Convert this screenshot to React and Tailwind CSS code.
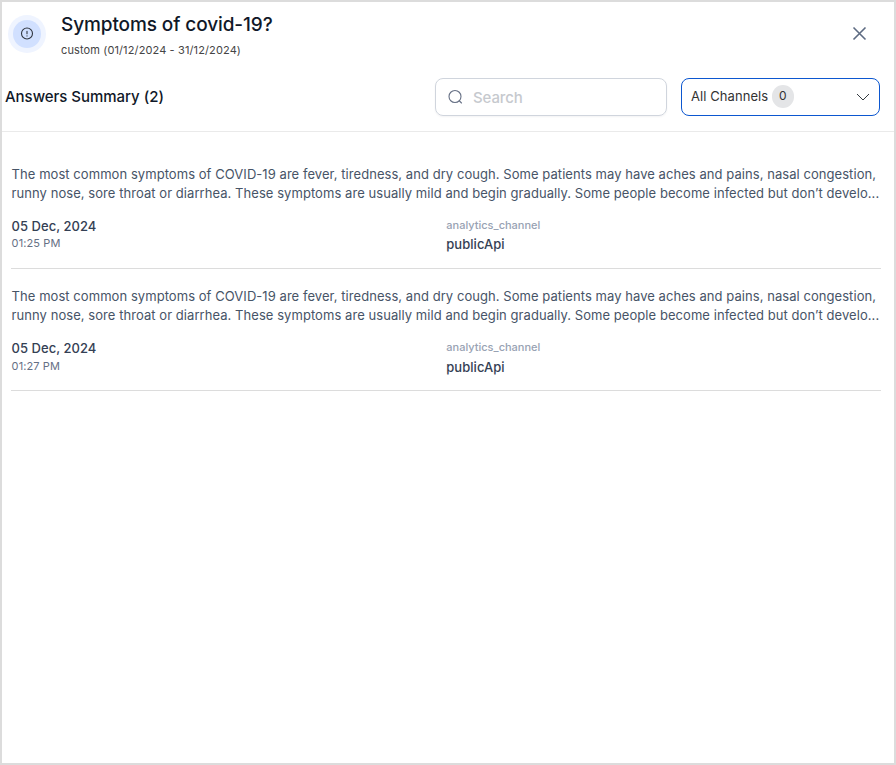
const answers = [
  { id: 1, date: '05 Dec, 2024', time: '01:25 PM', channel: 'publicApi', gap: 'mt-[-1px]' },
  { id: 2, date: '05 Dec, 2024', time: '01:27 PM', channel: 'publicApi', gap: 'mt-0' },
];

function Header() {
  return (
    <header className="flex h-[66px] items-start pl-[6px] pr-[27px]">
      <div className="mt-[13px] flex size-[38px] shrink-0 items-center justify-center rounded-full bg-[#eff4ff]">
        <div className="flex size-7 items-center justify-center rounded-full bg-[#d1e0ff]">
          <svg width="14" height="14" viewBox="0 0 14 14" fill="none" stroke="#303640" strokeWidth="1.1" strokeLinecap="round">
            <circle cx="7" cy="6.5" r="5.5" />
            <path d="M7 4.2v2.6M7 8.9v.1" />
          </svg>
        </div>
      </div>
      <div className="ml-[15px] flex-1 whitespace-nowrap">
        <h1 className="mt-[9px] text-[19px] leading-7 font-medium tracking-[-0.1px] text-[#101828]">Symptoms of covid-19?</h1>
        <p className="mt-[3px] text-[11px] leading-4 tracking-[0.12px] text-[#454545]">custom (01/12/2024 - 31/12/2024)</p>
      </div>
      <svg className="mt-[24px]" width="15" height="15" viewBox="0 0 15 15" fill="none" stroke="#5d6b82" strokeWidth="1.6">
        <path d="M1.5 1.5l12 12M13.5 1.5l-12 12" />
      </svg>
    </header>
  );
}

function Toolbar() {
  return (
    <div className="flex h-[64px] items-start border-b border-[#eaeaea] pt-[10px] pr-[14px] pl-[3px]">
      <h2 className="mt-[7px] flex-1 text-[15px] leading-6 font-medium tracking-[-0.03px] text-[#101828]">Answers Summary (2)</h2>
      <div className="flex h-[38px] w-[232px] items-center rounded-lg border border-[#d0d5dd] pl-[12px] shadow-[0_1px_2px_rgba(16,24,40,0.05)]">
        <svg width="16" height="16" viewBox="0 0 16 16" fill="none" stroke="#667085" strokeWidth="1.1" strokeLinecap="round">
          <circle cx="7" cy="7.5" r="6" />
          <path d="M11.5 12l2 2" />
        </svg>
        <input
          className="ml-[9px] w-40 pt-[2px] text-[15px] tracking-[-0.1px] font-medium text-[#667085] outline-none placeholder:text-[#c6c9ce]"
          placeholder="Search"
        />
      </div>
      <button className="ml-[14px] flex h-[38px] w-[199px] items-center rounded-lg border border-[#0c57d0] pr-[9px] pl-[9px] text-[13px] text-[#333]">
        <span className="tracking-[0.07px]">All Channels</span>
        <span className="ml-[3.5px] -mt-px flex h-[23px] w-[22px] justify-center rounded-full bg-[#e4e5e7] text-[12px] leading-[21px]">0</span>
        <svg className="ml-auto" width="14" height="8" viewBox="0 0 14 8" fill="none" stroke="#343a40" strokeWidth="1">
          <path d="M1 1l6 6 6-6" />
        </svg>
      </button>
    </div>
  );
}

function Answer({ date, time, channel, gap }) {
  return (
    <article className="h-[122px] border-b border-[#dcdcdc] pt-[18px] pl-[0.6px] whitespace-nowrap">
      <p className="text-[13px] leading-[19px] tracking-[0.057px] text-[#475467]">
        <span className="block">
          The most common symptoms of COVID-19 are fever, tiredness, and dry cough. Some patients may have aches and pains, nasal congestion,
        </span>
        <span className="block">
          runny nose, sore throat or diarrhea. These symptoms are usually mild and begin gradually. Some people become infected but don’t develo...
        </span>
      </p>
      <div className="mt-[13px] grid grid-cols-2">
        <div>
          <p className="text-[13px] leading-5 font-medium tracking-[0.03px] text-[#344054]">{date}</p>
          <p className={`text-[11px] leading-4 tracking-[0.1px] text-[#667085] ${gap}`}>{time}</p>
        </div>
        <div>
          <p className="text-[11px] leading-[18px] font-medium text-[#98a2b3]">analytics_channel</p>
          <p className={`text-[13px] leading-[22px] font-medium tracking-[0.03px] text-[#344054] ${gap}`}>{channel}</p>
        </div>
      </div>
    </article>
  );
}

export default function App() {
  return (
    <div
      className="h-[765px] w-[896px] overflow-hidden border-2 border-[#dcdcdc] bg-white"
      style={{ fontFamily: 'Inter, "Liberation Sans", sans-serif' }}
    >
      <Header />
      <Toolbar />
      <main className="mt-[15px] mr-[13px] ml-[9px]">
        {answers.map(({ id, ...answer }) => (
          <Answer key={id} {...answer} />
        ))}
      </main>
    </div>
  );
}
